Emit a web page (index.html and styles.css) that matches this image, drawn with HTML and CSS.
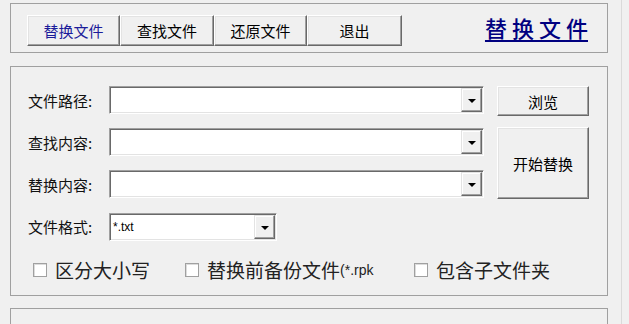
FILE: index.html
```html
<!doctype html>
<html lang="zh-CN">
<head>
    <meta charset="UTF-8">
    <title>替换文件</title>
    <link rel="stylesheet" href="styles.css">
</head>
<body>
<div id="window">
    <div class="group top-group">
        <ul id="tabs">
            <li class="btn tab tab-a current">替换文件</li>
            <li class="btn tab tab-b">查找文件</li>
            <li class="btn tab tab-a">还原文件</li>
            <li class="btn tab tab-c">退出</li>
        </ul>
        <a class="title" href="#">替换文<span class="last">件</span></a>
    </div>

    <div class="group main-group">
        <div class="form">
            <span class="label">文件路径:</span>
            <div class="combo"><span class="value"></span><span class="drop"><i></i></span></div>
            <div class="btn browse">浏览</div>

            <span class="label">查找内容:</span>
            <div class="combo"><span class="value"></span><span class="drop"><i></i></span></div>
            <div class="btn start">开始替换</div>

            <span class="label">替换内容:</span>
            <div class="combo"><span class="value"></span><span class="drop"><i></i></span></div>

            <span class="label">文件格式:</span>
            <div class="combo small"><span class="value">*.txt</span><span class="drop"><i></i></span></div>
        </div>
        <div class="checks">
            <label class="check w1"><span class="box"></span>区分大小写</label>
            <label class="check w2"><span class="box"></span>替换前备份文件<span class="ext">(*.rpk</span></label>
            <label class="check"><span class="box"></span>包含子文件夹</label>
        </div>
    </div>

    <div class="group bottom-group"></div>
</div>
</body>
</html>
```

FILE: styles.css
```css
*{
    margin: 0;
    padding: 0;
}
ul{
    list-style: none;
}
body{
    background: #f0f0f0;
    font-family: "Noto Sans CJK SC", "Liberation Sans", sans-serif;
    color: #000;
    overflow: hidden;
}
#window{
    width: 622px;
    height: 324px;
    box-sizing: border-box;
    border-right: 1px solid #dadada;
    padding: 3px 0 0 10px;
    overflow: hidden;
}
.group{
    width: 598px;
    box-sizing: border-box;
    border: 1px solid #a0a0a0;
}

/* top bar */
.top-group{
    height: 50px;
    display: flex;
    align-items: center;
    justify-content: space-between;
    padding: 0 19px 0 16px;
}
#tabs{
    display: flex;
    margin-top: 4px;
}
.btn{
    box-sizing: border-box;
    background: #f0f0f0;
    border: 1px solid;
    border-color: #fff #696969 #696969 #fff;
    box-shadow: inset -1px -1px #a0a0a0, inset 1px 1px #e3e3e3;
    display: flex;
    align-items: center;
    justify-content: center;
    font-size: 15px;
    line-height: 1;
}
.tab{
    height: 31px;
}
.tab-a{ width: 93px; }
.tab-b{ width: 94px; }
.tab-c{ width: 95px; }
.tab.current{
    color: #1c1c9a;
}
.title{
    color: #000080;
    font-size: 22px;
    font-weight: 500;
    letter-spacing: 5px;
    line-height: 26px;
    margin-top: -2px;
    text-decoration: underline;
    text-decoration-thickness: 2px;
    text-underline-offset: 3px;
}
.title .last{
    letter-spacing: 0;
}

/* main form */
.main-group{
    margin-top: 13px;
    height: 230px;
    padding: 19px 0 0 17px;
}
.form{
    display: grid;
    grid-template-columns: 68px 375px 92px;
    grid-template-rows: 28px 28px 28px 28px;
    column-gap: 13px;
    row-gap: 14px;
}
.label{
    align-self: center;
    font-size: 15px;
    color: #111;
}
.combo{
    box-sizing: border-box;
    height: 28px;
    background: #fff;
    border: 1px solid;
    border-color: #a0a0a0 #fff #fff #a0a0a0;
    box-shadow: inset 1px 1px #696969, inset -1px -1px #e3e3e3;
    padding: 1px 1px 1px 2px;
    display: flex;
    justify-content: space-between;
}
.combo.small{
    width: 168px;
    margin-top: 1px;
}
.combo .value{
    font-family: "Liberation Sans", sans-serif;
    font-size: 12px;
    line-height: 24px;
    padding-left: 1px;
}
.drop{
    box-sizing: border-box;
    width: 21px;
    height: 24px;
    background: #f0f0f0;
    border: 1px solid;
    border-color: #e3e3e3 #696969 #696969 #e3e3e3;
    box-shadow: inset -1px -1px #a0a0a0, inset 1px 1px #fff;
    display: flex;
    align-items: center;
    justify-content: center;
}
.drop i{
    width: 0;
    height: 0;
    border-left: 4px solid transparent;
    border-right: 4px solid transparent;
    border-top: 4px solid #000;
    margin-top: 1px;
}
.browse{
    grid-column: 3;
    grid-row: 1;
    height: 30px;
}
.start{
    grid-column: 3;
    grid-row: 2 / 4;
    margin-top: -1px;
    height: 72px;
}

/* checkboxes */
.checks{
    display: flex;
    align-items: center;
    margin-top: 17px;
    padding-left: 5px;
    font-size: 19px;
    line-height: 26px;
    color: #222;
}
.check{
    display: flex;
    align-items: center;
}
.check.w1{ width: 152px; }
.check.w2{ width: 229px; }
.box{
    box-sizing: border-box;
    width: 14px;
    height: 14px;
    background: #fff;
    border: 1px solid #a0a0a0;
    box-shadow: inset 1px 1px #dcdcdc;
    margin-right: 8px;
}
.ext{
    font-family: "Liberation Sans", sans-serif;
    font-size: 14px;
}

.bottom-group{
    margin-top: 12px;
    height: 40px;
}
```
